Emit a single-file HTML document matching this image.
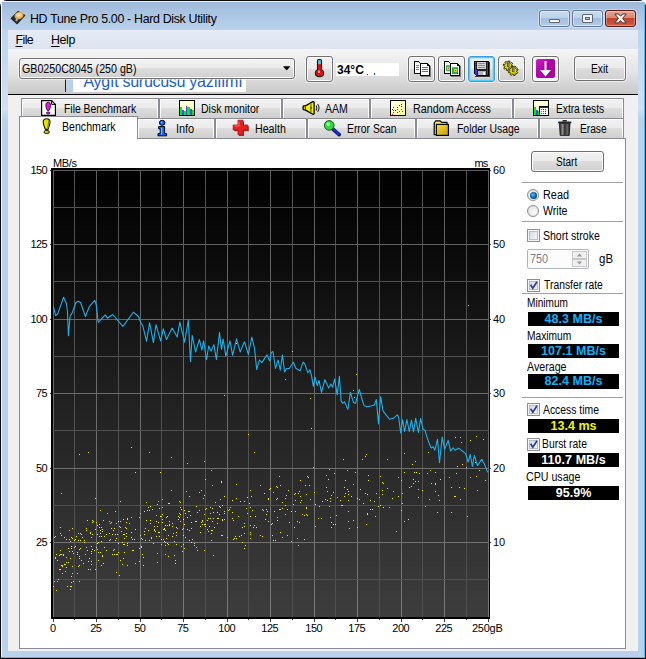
<!DOCTYPE html>
<html lang="en">
<head>
<meta charset="utf-8">
<title>HD Tune Pro 5.00 - Hard Disk Utility</title>
<style>
html,body{margin:0;padding:0;background:#fff;}
body{width:646px;height:659px;position:relative;overflow:hidden;font-family:"Liberation Sans",sans-serif;font-size:11px;color:#000;}
.a{position:absolute;}
.t{position:absolute;white-space:nowrap;line-height:1;}
#win{left:0;top:0;width:646px;height:659px;box-sizing:border-box;border-radius:7px 7px 0 0;background:#b9d1ea;overflow:hidden;}
#tbar{left:0;top:0;width:646px;height:30px;background:linear-gradient(#9cb7d7 0,#a7c1e0 10px,#bad2ec 30px);}
#edgeL{left:0;top:0;width:1px;height:659px;background:#0c0c0c;}
#edgeL2{left:1px;top:1px;width:1px;height:656px;background:#f4f8fc;}
#edgeT{left:0;top:0;width:646px;height:1px;background:#0c0c0c;}
#edgeT2{left:2px;top:1px;width:642px;height:1px;background:#e8f0f8;}
#edgeR{left:645px;top:0;width:1px;height:659px;background:#000;}
#edgeR2{left:644px;top:2px;width:1px;height:656px;background:#3cc6f4;}
#edgeB{left:0;top:658px;width:646px;height:1px;background:#000;}
#edgeB2{left:1px;top:657px;width:644px;height:1px;background:#2ccdf0;}
#menubar{left:8px;top:30px;width:630px;height:19px;background:linear-gradient(#e6ebf5,#dde4ef);}
#client{left:8px;top:49px;width:630px;height:602px;background:#f0f0f0;}
#toolbar{left:8px;top:49px;width:630px;height:45px;background:linear-gradient(#f5f5f5,#e4e4e4 50%,#c8c8c8);}
#tline{left:8px;top:94px;width:630px;height:1px;background:#000;}
.cap{top:10px;height:17px;box-sizing:border-box;border:1px solid #66789a;border-radius:3px;box-shadow:0 0 0 1px rgba(255,255,255,.35),inset 0 0 0 1px rgba(255,255,255,.45);}
.capb{background:linear-gradient(#c9dbef 0,#bdd2ea 45%,#a4bedd 50%,#b4cbe6 100%);}
.capr{background:linear-gradient(#e6a595 0,#dc8572 45%,#c4432c 50%,#cc5c40 100%);border-color:#581818;box-shadow:0 0 0 1px rgba(255,255,255,.35),inset 0 0 0 1px rgba(255,255,255,.3);}
.btn{box-sizing:border-box;border:1px solid #707070;border-radius:3px;background:linear-gradient(#f2f2f2 0,#ebebeb 48%,#dddddd 50%,#cfcfcf 100%);box-shadow:inset 0 0 0 1px #fcfcfc,0 0 0 1px rgba(255,255,255,.55);}
.tab{box-sizing:border-box;border:1px solid #898c95;border-bottom:none;height:20px;background:linear-gradient(#f2f2f2 0,#ebebeb 48%,#dddddd 50%,#cfcfcf 100%);box-shadow:inset 1px 1px 0 #fcfcfc,inset -1px 0 0 #fcfcfc;}
#pane{left:19px;top:138px;width:607px;height:511px;box-sizing:border-box;border:1px solid #898c95;background:#fff;}
#seltab{left:19px;top:116px;width:119px;height:23px;box-sizing:border-box;border:1px solid #898c95;border-bottom:none;background:#fff;}
.sep{left:522px;width:101px;height:1px;background:#a0a0a0;}
.lcd{left:528px;width:91px;height:14px;background:#000;}
.lcdt{position:absolute;left:0;width:91px;text-align:center;top:1px;font-weight:bold;font-size:12.5px;line-height:13px;white-space:nowrap;letter-spacing:0.05px}
.yl{letter-spacing:-0.6px}.xl{letter-spacing:-0.5px;text-indent:-0.5px}
.chk{width:13px;height:13px;box-sizing:border-box;border:1px solid #8e8f8f;background:linear-gradient(135deg,#ccd2dc 0,#e8ebf0 55%,#fafbfc 100%);box-shadow:inset 0 0 0 1px #f4f4f4, inset 0 0 0 2px #b8bec8;}
.rad{width:12px;height:12px;box-sizing:border-box;border:1px solid #8e8f8f;border-radius:50%;background:radial-gradient(circle at 60% 60%,#fdfdfd 0,#e4e6e8 60%,#c8ccd0 100%);}
</style>
</head>
<body>
<div id="win" class="a">
<div id="tbar" class="a"></div>
<div class="a" style="left:2px;top:30px;width:6px;height:90px;background:linear-gradient(#bed5ef 0,#cfe1f4 88%,#b9d1ea 100%)"></div><div class="a" style="left:638px;top:30px;width:6px;height:90px;background:linear-gradient(#bed5ef 0,#cfe1f4 88%,#b9d1ea 100%)"></div>
<div id="edgeL" class="a"></div><div id="edgeL2" class="a"></div>
<div id="edgeT" class="a"></div><div id="edgeT2" class="a"></div>
<div id="edgeR" class="a"></div><div id="edgeR2" class="a"></div>
<div id="edgeB" class="a"></div><div id="edgeB2" class="a"></div>

<!-- title icon -->
<svg class="a" style="left:9px;top:10px" width="18" height="16" viewBox="0 0 18 16">
<path d="M1.5 8.5 L9 1 L16.5 5.5 L8 14.5 Z" fill="#222"/>
<path d="M2 8 L9 1 L16 5 L8 13.5 Z" fill="#2a2a2a"/>
<ellipse cx="10" cy="5.6" rx="4.6" ry="3.6" fill="#e9a94a" transform="rotate(-18 10 5.6)"/>
<ellipse cx="10" cy="5.2" rx="3" ry="2.3" fill="#f6cf84" transform="rotate(-18 10 5.2)"/>
<circle cx="10" cy="5" r="1.1" fill="#e8e8e8"/>
<path d="M8.2 6.5 L6.2 11 L8.2 11.5 L9.4 7 Z" fill="#b8b4b0"/>
</svg>
<span class="t" id="ttl" style="left:30px;top:13px;font-size:12.4px;color:#000;letter-spacing:-0.325px">HD Tune Pro 5.00 - Hard Disk Utility</span>

<!-- caption buttons -->
<div class="a cap capb" style="left:539px;width:31px"></div>
<div class="a" style="left:549px;top:19px;width:11px;height:4px;box-sizing:border-box;border:1px solid #5a6578;background:#f4f6f9;border-radius:1px"></div>
<div class="a cap capb" style="left:572px;width:31px"></div>
<div class="a" style="left:582px;top:14px;width:11px;height:9px;box-sizing:border-box;border:1px solid #5a6578;background:#f4f6f9;border-radius:1px"></div>
<div class="a" style="left:585px;top:17px;width:5px;height:3px;box-sizing:border-box;border:1px solid #5a6578;background:#aec5e0"></div>
<div class="a cap capr" style="left:605px;width:31px"></div>
<svg class="a" style="left:614px;top:13px" width="13" height="11" viewBox="0 0 13 11"><path d="M.8 1 L4.4 1 L6.5 3.2 L8.6 1 L12.2 1 L8.6 5.4 L12.2 9.9 L8.6 9.9 L6.5 7.6 L4.4 9.9 L.8 9.9 L4.4 5.4 Z" fill="#fbf8f6" stroke="#4a3030" stroke-width="1" stroke-linejoin="round"/></svg>

<!-- menu -->
<div id="menubar" class="a"></div>
<span class="t" id="mFile" style="left:15.5px;top:34px;font-size:12.4px;letter-spacing:-0.570px"><u style="text-underline-offset:2px">F</u>ile</span>
<span class="t" id="mHelp" style="left:51px;top:34px;font-size:12.4px;letter-spacing:-0.400px"><u style="text-underline-offset:2px">H</u>elp</span>

<div id="client" class="a"></div>
<div id="toolbar" class="a"></div>
<div id="tline" class="a"></div>

<!-- stray tooltip artifact -->
<div class="a" style="left:65px;top:79px;width:1px;height:13px;background:#1c1c1c"></div>
<div class="a" style="left:67px;top:79px;width:6px;height:13px;background:#b7cff0"></div>
<div class="a" style="left:73px;top:79px;width:173px;height:13px;background:#fff;overflow:hidden"><span class="t" id="tip" style="left:10.5px;top:-5px;font-size:16px;color:#2060c4;letter-spacing:-0.274px">Aygıt sürücüsü yazılımı</span></div>

<!-- combo box -->
<div class="a btn" style="left:19px;top:58px;width:276px;height:21px;border-radius:3px"></div>
<span class="t" id="cmb" style="left:22.27px;top:63.00px;font-size:12.5px;transform:scaleX(0.8538);transform-origin:0 0">GB0250C8045 (250 gB)</span>
<svg class="a" style="left:283px;top:66px" width="8" height="5" viewBox="0 0 8 5"><path d="M0 .2 L7.4 .2 L3.7 4.4 Z" fill="#000"/></svg>

<!-- thermometer button -->
<div class="a btn" style="left:306px;top:56px;width:27px;height:26px"></div>
<svg class="a" style="left:314px;top:59px" width="11" height="19" viewBox="0 0 11 19">
<path d="M3.5 1.5 Q3.5 .5 5.5 .5 Q7.5 .5 7.5 1.5 L7.5 10.4 Q9.6 11.6 9.6 14 Q9.6 17.8 5.5 17.8 Q1.4 17.8 1.4 14 Q1.4 11.6 3.5 10.4 Z" fill="#e01010" stroke="#101010" stroke-width="1.1"/>
<rect x="4.1" y="1.2" width="2.8" height="4" fill="#38d0e8"/>
<rect x="4.2" y="11.5" width="1.6" height="2.4" fill="#ffb0b0"/>
</svg>
<div class="a" style="left:336px;top:63px;width:63px;height:13px;background:#fff"></div>
<span class="t" id="temp" style="left:337px;top:64px;font-size:12px;font-weight:bold">34°C</span>
<div class="a" style="left:367px;top:74px;width:1px;height:1px;background:#2040d0"></div>
<div class="a" style="left:374px;top:73px;width:1px;height:2px;background:#2040d0"></div>

<!-- toolbar buttons -->
<div class="a btn" style="left:408px;top:56px;width:27px;height:26px"></div>
<svg class="a" style="left:413px;top:60px" width="19" height="18" viewBox="0 0 19 18" shape-rendering="crispEdges">
<path d="M1.5 1.5 H5.5 L7.5 3.5 V13.5 H1.5 Z" fill="#fff" stroke="#000"/>
<path d="M3 5.5h3M3 7.5h3M3 9.5h3" stroke="#1e90ff"/>
<path d="M8 16.5h9.5M17.5 6v11" stroke="#808080"/>
<path d="M7.5 3.5 H14.5 L16.5 5.5 V15.5 H7.5 Z" fill="#fff" stroke="#000"/>
<path d="M14.5 3.5V5.5H16.5" fill="none" stroke="#000"/>
<path d="M9 7.5h6M9 9.5h6M9 11.5h6" stroke="#1e78ff"/>
</svg>
<div class="a btn" style="left:438px;top:56px;width:27px;height:26px"></div>
<svg class="a" style="left:443px;top:60px" width="19" height="18" viewBox="0 0 19 18" shape-rendering="crispEdges">
<path d="M1.5 1.5 H5.5 L7.5 3.5 V13.5 H1.5 Z" fill="#fff" stroke="#000"/>
<rect x="3" y="5" width="4" height="6" fill="#20c040"/><rect x="3" y="5" width="4" height="1" fill="#30b8f0"/><rect x="4" y="7" width="3" height="3" fill="#f0d020"/><rect x="5" y="8" width="1" height="1" fill="#e02020"/>
<path d="M8 16.5h9.5M17.5 6v11" stroke="#808080"/>
<path d="M7.5 3.5 H14.5 L16.5 5.5 V15.5 H7.5 Z" fill="#fff" stroke="#000"/>
<path d="M14.5 3.5V5.5H16.5" fill="none" stroke="#000"/>
<rect x="9" y="7" width="6" height="7" fill="#20b040"/><rect x="9" y="7" width="6" height="1" fill="#30b8f0"/><rect x="11" y="9" width="3" height="3" fill="#f0d020"/><rect x="12" y="10" width="1" height="1" fill="#e02020"/><rect x="14" y="13" width="1" height="1" fill="#000"/>
</svg>
<div class="a" style="left:468px;top:56px;width:27px;height:26px;box-sizing:border-box;border:1px solid #3c9bd8;border-radius:3px;background:linear-gradient(#f2f2f2 0,#ebebeb 48%,#dddddd 50%,#cfcfcf 100%);box-shadow:inset 0 0 0 1px #48d4fa,inset 0 0 0 2px rgba(120,220,250,.45),0 0 0 1px rgba(255,255,255,.55)"></div>
<svg class="a" style="left:474px;top:61px" width="16" height="16" viewBox="0 0 16 16" shape-rendering="crispEdges">
<path d="M1 15.5h14.5M15.5 1v15" stroke="#404040"/>
<path d="M.5 .5 H14.5 V14.5 H2.5 L.5 12.5 Z" fill="#3838f0" stroke="#000"/>
<rect x="3" y="1" width="9" height="7" fill="#d4d4d4"/>
<path d="M3 8.5h9M2.5 1v8M12.5 1v8" stroke="#202020" fill="none"/>
<path d="M4 2.5h7M4 4.5h7M4 6.5h7" stroke="#8c8c8c"/>
<rect x="4" y="10" width="8" height="4" fill="#b4b4b4"/>
<path d="M3.5 14V9.5H12.5V14" stroke="#202020" fill="none"/>
<rect x="9" y="11" width="2" height="3" fill="#f0f0f0"/>
</svg>
<div class="a btn" style="left:498px;top:56px;width:27px;height:26px"></div>
<svg class="a" style="left:502px;top:60px" width="18" height="17" viewBox="0 0 18 17">
<path d="M11.1 5.9 L10.8 7.6 L9.3 7.2 L8.7 8.1 L9.6 9.4 L8.2 10.3 L7.4 9.0 L6.3 9.2 L6.1 10.7 L4.4 10.4 L4.8 8.9 L3.9 8.3 L2.6 9.2 L1.7 7.8 L3.0 7.0 L2.8 5.9 L1.3 5.7 L1.6 4.0 L3.1 4.4 L3.7 3.5 L2.8 2.2 L4.2 1.3 L5.0 2.6 L6.1 2.4 L6.3 0.9 L8.0 1.2 L7.6 2.7 L8.5 3.3 L9.8 2.4 L10.7 3.8 L9.4 4.6 L9.6 5.7 Z" fill="#ece400" stroke="#2a2a00" stroke-width=".9" stroke-linejoin="round"/>
<path d="M15.8 12.4 L15.0 13.9 L13.7 13.1 L12.9 13.7 L13.4 15.2 L11.8 15.7 L11.4 14.2 L10.3 14.1 L9.6 15.4 L8.1 14.6 L8.9 13.3 L8.3 12.5 L6.8 13.0 L6.3 11.4 L7.8 11.0 L7.9 9.9 L6.6 9.2 L7.4 7.7 L8.7 8.5 L9.5 7.9 L9.0 6.4 L10.6 5.9 L11.0 7.4 L12.1 7.5 L12.8 6.2 L14.3 7.0 L13.5 8.3 L14.1 9.1 L15.6 8.6 L16.1 10.2 L14.6 10.6 L14.5 11.7 Z" fill="#ece400" stroke="#2a2a00" stroke-width=".9" stroke-linejoin="round"/>
<path d="M5.4 2.6 L6.2 1.2 L7 2.6 V6.8 H5.4 Z M10.4 7.6 L11.2 6.2 L12 7.6 V11.8 H10.4 Z" fill="#b8b8b8" stroke="#303030" stroke-width=".8"/>
</svg>
<div class="a" style="left:532px;top:56px;width:27px;height:26px;box-sizing:border-box;border:1px solid #707070;border-radius:3px;background:#f4f4f4;box-shadow:inset 0 0 0 1px #fcfcfc,0 0 0 1px rgba(255,255,255,.55)"></div>
<div class="a" style="left:536px;top:59px;width:19px;height:19px;border-radius:2px;background:linear-gradient(135deg,#c428bc 0,#b000a8 45%,#a40098 100%)"></div>
<svg class="a" style="left:536px;top:59px" width="19" height="19" viewBox="0 0 19 19"><path d="M8.5 2 L10.5 2 L10.5 11 L15 11 L9.5 17.4 L4 11 L8.5 11 Z" fill="#fff"/></svg>
<div class="a btn" style="left:574px;top:56px;width:52px;height:25px"></div>
<span class="t" id="exit" style="left:590.72px;top:63.00px;font-size:12.5px;transform:scaleX(0.8227);transform-origin:0 0">Exit</span>

<!-- tabs row 1 -->
<div class="a tab" style="left:21px;top:98px;width:138px"></div>
<div class="a tab" style="left:159px;top:98px;width:123px"></div>
<div class="a tab" style="left:282px;top:98px;width:88px"></div>
<div class="a tab" style="left:370px;top:98px;width:143px"></div>
<div class="a tab" style="left:513px;top:98px;width:111px"></div>
<!-- tabs row 2 -->
<div class="a tab" style="left:21px;top:118px;width:118px"></div>
<div class="a tab" style="left:137px;top:118px;width:78px"></div>
<div class="a tab" style="left:215px;top:118px;width:92px"></div>
<div class="a tab" style="left:307px;top:118px;width:109px"></div>
<div class="a tab" style="left:416px;top:118px;width:123px"></div>
<div class="a tab" style="left:539px;top:118px;width:85px"></div>
<div id="pane" class="a"></div>
<div id="seltab" class="a"></div>

<!-- tab icons row 1 -->
<svg class="a" style="left:41px;top:100px" width="15" height="16" viewBox="0 0 15 16">
<path d="M.6 .6 L10.6 .6 L14.4 4.4 L14.4 15.4 L.6 15.4 Z" fill="#fff" stroke="#000" stroke-width="1.2"/>
<path d="M10.6 .6 L10.6 4.4 L14.4 4.4" fill="none" stroke="#000" stroke-width="1"/>
<path d="M7.2 2.2 Q9.6 2.2 9.6 5.2 Q9.6 7.8 8 10.6 L6.4 10.6 Q4.8 7.8 4.8 5.2 Q4.8 2.2 7.2 2.2 Z" fill="#e814e0" stroke="#300030" stroke-width=".8"/>
<ellipse cx="7.2" cy="13" rx="1.7" ry="1.1" fill="#e814e0" stroke="#300030" stroke-width=".8"/>
</svg>
<svg class="a" style="left:178px;top:99px" width="19" height="19" viewBox="0 0 19 19" shape-rendering="crispEdges">
<defs><linearGradient id="dm" x1="0" y1="0" x2="1" y2="1"><stop offset="0" stop-color="#fffff0"/><stop offset="1" stop-color="#ffff90"/></linearGradient></defs>
<rect x="1" y="1" width="16" height="16" fill="#000"/>
<rect x="2" y="2" width="14" height="14" fill="url(#dm)"/>
<rect x="2" y="8" width="2" height="8" fill="#00f000"/>
<rect x="4" y="11" width="2" height="5" fill="#4848ff"/>
<rect x="6" y="12" width="2" height="4" fill="#00f000"/>
<rect x="8" y="7" width="1" height="9" fill="#4848ff"/>
<rect x="9" y="8" width="3" height="8" fill="#00f000"/>
<rect x="12" y="10" width="2" height="6" fill="#4848ff"/>
<rect x="14" y="11" width="2" height="5" fill="#00f000"/>
</svg>
<svg class="a" style="left:301px;top:99px" width="20" height="18" viewBox="0 0 20 18"><g transform="translate(1.2 1.6) scale(.93 .86)">
<path d="M3.2 6.2 L11.4 1.2 Q12.8 .8 12.8 2.2 L12.8 14.8 Q12.8 16.4 11.4 15.8 L3.2 10.8 L2 10.8 Q1 10.8 1 9.8 L1 7.2 Q1 6.2 2 6.2 Z" fill="#f4f000" stroke="#000" stroke-width="1.4" stroke-linejoin="round"/>
<path d="M9.4 3.4V13.8" stroke="#707000" stroke-width="1.3"/>
<path d="M3.4 7v3" stroke="#000" stroke-width="1"/>
<rect x="8.8" y="7.6" width="1.3" height="1.8" fill="#101010"/>
<path d="M14.8 5.6 Q16.6 8.5 14.8 11.4 M16.6 4 Q19.6 8.5 16.6 13" fill="none" stroke="#202020" stroke-width="1.1"/>
</g></svg>
<svg class="a" style="left:390px;top:100px" width="17" height="17" viewBox="0 0 17 17" shape-rendering="crispEdges">
<defs><linearGradient id="ra" x1="0" y1="0" x2="1" y2="1"><stop offset="0" stop-color="#fffff0"/><stop offset="1" stop-color="#ffff90"/></linearGradient></defs>
<rect x="0" y="0" width="16" height="16" fill="#000"/>
<rect x="1" y="1" width="14" height="14" fill="url(#ra)"/>
<rect x="3" y="7" width="1" height="1" fill="#1010ff"/><rect x="2" y="9" width="1" height="1" fill="#1010ff"/><rect x="5" y="10" width="1" height="1" fill="#1010ff"/><rect x="7" y="7" width="1" height="1" fill="#1010ff"/><rect x="9" y="5" width="1" height="1" fill="#1010ff"/><rect x="11" y="4" width="1" height="1" fill="#1010ff"/><rect x="11" y="6" width="1" height="1" fill="#1010ff"/><rect x="3" y="10" width="1" height="1" fill="#ff1010"/><rect x="3" y="12" width="1" height="1" fill="#ff1010"/><rect x="2" y="14" width="1" height="1" fill="#ff1010"/><rect x="7" y="9" width="1" height="1" fill="#ff1010"/><rect x="7" y="12" width="1" height="1" fill="#ff1010"/><rect x="9" y="11" width="1" height="1" fill="#ff1010"/><rect x="11" y="9" width="1" height="1" fill="#ff1010"/><rect x="12" y="11" width="1" height="1" fill="#ff1010"/>
</svg>
<svg class="a" style="left:533px;top:100px" width="17" height="17" viewBox="0 0 17 17" shape-rendering="crispEdges">
<defs><linearGradient id="et" x1="0" y1="0" x2="1" y2="1"><stop offset="0" stop-color="#fffff0"/><stop offset="1" stop-color="#ffffa0"/></linearGradient></defs>
<rect x="0" y="0" width="16" height="16" fill="#000"/>
<rect x="1" y="1" width="14" height="14" fill="url(#et)"/>
<rect x="1" y="7" width="2" height="8" fill="#00f000"/>
<rect x="3" y="10" width="2" height="5" fill="#4848ff"/>
<rect x="5" y="11" width="1" height="4" fill="#00f000"/>
<rect x="6" y="6" width="9" height="9" fill="#000"/>
<rect x="7" y="7" width="8" height="1" fill="#2020e0"/>
<rect x="7" y="8" width="8" height="7" fill="#fff"/>
<rect x="8" y="9" width="1" height="1" fill="#ff1010"/><rect x="10" y="9" width="1" height="1" fill="#1010ff"/><rect x="12" y="9" width="1" height="1" fill="#ff1010"/><rect x="8" y="11" width="1" height="1" fill="#10c010"/><rect x="10" y="11" width="1" height="1" fill="#ff1010"/><rect x="12" y="11" width="1" height="1" fill="#ff1010"/><rect x="8" y="13" width="1" height="1" fill="#ff1010"/><rect x="10" y="13" width="1" height="1" fill="#ff1010"/><rect x="12" y="13" width="1" height="1" fill="#1010ff"/>
</svg>
<!-- tab icons row 2 -->
<svg class="a" style="left:42px;top:118px" width="10" height="17" viewBox="0 0 10 17">
<path d="M4.6 .8 Q8 .8 8 4 Q8 7 6 11.4 L3.4 11.4 Q1.2 7 1.2 4 Q1.2 .8 4.6 .8 Z" fill="#e6e600" stroke="#181800" stroke-width="1.1"/>
<path d="M6.4 2.4 Q7.2 4.4 5.4 10.6" fill="none" stroke="#909000" stroke-width="1.2"/>
<rect x="2.2" y="12.6" width="5" height="2.8" rx="1.2" fill="#d8d800" stroke="#181800" stroke-width="1"/>
</svg>
<svg class="a" style="left:157px;top:119px" width="11" height="18" viewBox="0 0 11 18">
<ellipse cx="5.2" cy="3.8" rx="2.8" ry="2.5" fill="#1060ff" stroke="#000" stroke-width="1"/>
<path d="M1.6 7.6 L7.6 7.6 L7.6 14.6 L9.6 14.6 L9.6 16.8 L1 16.8 L1 14.6 L3.2 14.6 L3.2 9.8 L1.6 9.8 Z" fill="#1060ff" stroke="#000" stroke-width="1"/>
<path d="M4.6 8.6V15.6M4.6 2.6v2" stroke="#40d0ff" stroke-width="1.4"/>
</svg>
<svg class="a" style="left:232px;top:119px" width="18" height="18" viewBox="0 0 18 18">
<path d="M7 2.4 L12 2.4 L12 7.2 L16.8 7.2 L16.8 12.2 L12 12.2 L12 17 L7 17 L7 12.2 L2.2 12.2 L2.2 7.2 L7 7.2 Z" fill="#701010" opacity=".8"/>
<path d="M6 1.2 L11 1.2 L11 6 L15.8 6 L15.8 11 L11 11 L11 15.8 L6 15.8 L6 11 L1.2 11 L1.2 6 L6 6 Z" fill="#e82020" stroke="#b01010" stroke-width=".8"/>
<path d="M7 2.4v4.6H2.4" fill="none" stroke="#ff7070" stroke-width="1"/>
</svg>
<svg class="a" style="left:323px;top:119px" width="19" height="18" viewBox="0 0 19 18">
<path d="M9.6 9.8 L16.2 15.6" stroke="#101060" stroke-width="3.6" stroke-linecap="round"/>
<path d="M9.6 9.6 L15.8 15" stroke="#2030e0" stroke-width="2" stroke-linecap="round"/>
<circle cx="6.2" cy="6.4" r="4.8" fill="#30d840" stroke="#106010" stroke-width="1"/>
<circle cx="5.2" cy="5.2" r="2" fill="#90f898"/>
</svg>
<svg class="a" style="left:433px;top:119px" width="18" height="18" viewBox="0 0 18 18">
<path d="M1.2 4 L2.8 1.8 L7.2 1.8 L8.6 3.4 L14 3.4 L14 15.6 L1.2 15.6 Z" fill="#f8e860" stroke="#000" stroke-width="1.2" stroke-linejoin="round"/>
<defs><linearGradient id="fg" x1="0" y1="0" x2="1" y2="1"><stop offset="0" stop-color="#f8e040"/><stop offset="1" stop-color="#c89808"/></linearGradient></defs>
<rect x="3.4" y="5.4" width="12" height="11" fill="url(#fg)" stroke="#000" stroke-width="1.2"/>
</svg>
<svg class="a" style="left:557px;top:119px" width="16" height="18" viewBox="0 0 16 18">
<defs><linearGradient id="tg" x1="0" y1="0" x2="1" y2="0"><stop offset="0" stop-color="#181818"/><stop offset=".3" stop-color="#909090"/><stop offset=".5" stop-color="#303030"/><stop offset=".75" stop-color="#686868"/><stop offset="1" stop-color="#101010"/></linearGradient></defs>
<path d="M2.4 4.4 L13 4.4 L12.2 16.4 L3.2 16.4 Z" fill="url(#tg)" stroke="#101010" stroke-width=".8"/>
<rect x="1" y="2.4" width="13.4" height="2.2" rx=".8" fill="#282828"/>
<rect x="5.6" y="1" width="4.2" height="1.6" fill="#282828"/>
</svg>

<!-- tab labels -->
<span class="t" id="tb1" style="left:64.10px;top:103.00px;font-size:12.5px;transform:scaleX(0.8299);transform-origin:0 0">File Benchmark</span>
<span class="t" id="tb2" style="left:201.04px;top:103.00px;font-size:12.5px;transform:scaleX(0.8400);transform-origin:0 0">Disk monitor</span>
<span class="t" id="tb3" style="left:324.74px;top:103.00px;font-size:12.5px;transform:scaleX(0.8447);transform-origin:0 0">AAM</span>
<span class="t" id="tb4" style="left:412.91px;top:103.00px;font-size:12.5px;transform:scaleX(0.8612);transform-origin:0 0">Random Access</span>
<span class="t" id="tb5" style="left:556.11px;top:103.00px;font-size:12.5px;transform:scaleX(0.8154);transform-origin:0 0">Extra tests</span>
<span class="t" id="tb6" style="left:61.78px;top:121.00px;font-size:12.5px;transform:scaleX(0.8478);transform-origin:0 0">Benchmark</span>
<span class="t" id="tb7" style="left:176.17px;top:123.00px;font-size:12.5px;transform:scaleX(0.8721);transform-origin:0 0">Info</span>
<span class="t" id="tb8" style="left:255.15px;top:123.00px;font-size:12.5px;transform:scaleX(0.8526);transform-origin:0 0">Health</span>
<span class="t" id="tb9" style="left:347.09px;top:123.00px;font-size:12.5px;transform:scaleX(0.8295);transform-origin:0 0">Error Scan</span>
<span class="t" id="tb10" style="left:457.13px;top:123.00px;font-size:12.5px;transform:scaleX(0.8342);transform-origin:0 0">Folder Usage</span>
<span class="t" id="tb11" style="left:579.52px;top:123.00px;font-size:12.5px;transform:scaleX(0.8156);transform-origin:0 0">Erase</span>

<!-- chart -->
<svg class="a" style="left:0;top:0" width="646" height="659" viewBox="0 0 646 659" shape-rendering="crispEdges">
<defs>
<linearGradient id="bg" x1="0" y1="0" x2="0" y2="1"><stop offset="0" stop-color="#000"/><stop offset=".2" stop-color="#0b0b0b"/><stop offset=".5" stop-color="#202020"/><stop offset="1" stop-color="#3d3d3d"/></linearGradient>
<linearGradient id="gMv" x1="0" y1="0" x2="0" y2="1"><stop offset="0" stop-color="#5e5e5e"/><stop offset="1" stop-color="#787878"/></linearGradient>
<linearGradient id="gmv" x1="0" y1="0" x2="0" y2="1"><stop offset="0" stop-color="#525252"/><stop offset="1" stop-color="#505050"/></linearGradient>
</defs>
<style>.gMv{fill:url(#gMv)}.gmv{fill:url(#gmv)}</style>
<rect x="51" y="168" width="439" height="451" fill="#000"/>
<rect x="53" y="170" width="436" height="447" fill="url(#bg)"/>
<rect class="gMv" x="53" y="170" width="1" height="447"/><rect class="gmv" x="74" y="170" width="1" height="447"/><rect class="gMv" x="96" y="170" width="1" height="447"/><rect class="gmv" x="118" y="170" width="1" height="447"/><rect class="gMv" x="140" y="170" width="1" height="447"/><rect class="gmv" x="161" y="170" width="1" height="447"/><rect class="gMv" x="183" y="170" width="1" height="447"/><rect class="gmv" x="205" y="170" width="1" height="447"/><rect class="gMv" x="227" y="170" width="1" height="447"/><rect class="gmv" x="248" y="170" width="1" height="447"/><rect class="gMv" x="270" y="170" width="1" height="447"/><rect class="gmv" x="292" y="170" width="1" height="447"/><rect class="gMv" x="314" y="170" width="1" height="447"/><rect class="gmv" x="335" y="170" width="1" height="447"/><rect class="gMv" x="357" y="170" width="1" height="447"/><rect class="gmv" x="379" y="170" width="1" height="447"/><rect class="gMv" x="401" y="170" width="1" height="447"/><rect class="gmv" x="422" y="170" width="1" height="447"/><rect class="gMv" x="444" y="170" width="1" height="447"/><rect class="gmv" x="466" y="170" width="1" height="447"/><rect class="gMv" x="488" y="170" width="1" height="447"/><rect x="53" y="170" width="436" height="1" fill="#5e5e5e"/><rect x="53" y="207" width="436" height="1" fill="#505050"/><rect x="53" y="244" width="436" height="1" fill="#626262"/><rect x="53" y="281" width="436" height="1" fill="#505050"/><rect x="53" y="319" width="436" height="1" fill="#666666"/><rect x="53" y="356" width="436" height="1" fill="#505050"/><rect x="53" y="393" width="436" height="1" fill="#6a6a6a"/><rect x="53" y="430" width="436" height="1" fill="#505050"/><rect x="53" y="468" width="436" height="1" fill="#6f6f6f"/><rect x="53" y="505" width="436" height="1" fill="#505050"/><rect x="53" y="542" width="436" height="1" fill="#737373"/><rect x="53" y="579" width="436" height="1" fill="#505050"/>
<rect x="53" y="619" width="1" height="3" fill="#404040"/><rect x="74" y="619" width="1" height="1" fill="#404040"/><rect x="96" y="619" width="1" height="3" fill="#404040"/><rect x="118" y="619" width="1" height="1" fill="#404040"/><rect x="140" y="619" width="1" height="3" fill="#404040"/><rect x="161" y="619" width="1" height="1" fill="#404040"/><rect x="183" y="619" width="1" height="3" fill="#404040"/><rect x="205" y="619" width="1" height="1" fill="#404040"/><rect x="227" y="619" width="1" height="3" fill="#404040"/><rect x="248" y="619" width="1" height="1" fill="#404040"/><rect x="270" y="619" width="1" height="3" fill="#404040"/><rect x="292" y="619" width="1" height="1" fill="#404040"/><rect x="314" y="619" width="1" height="3" fill="#404040"/><rect x="335" y="619" width="1" height="1" fill="#404040"/><rect x="357" y="619" width="1" height="3" fill="#404040"/><rect x="379" y="619" width="1" height="1" fill="#404040"/><rect x="401" y="619" width="1" height="3" fill="#404040"/><rect x="422" y="619" width="1" height="1" fill="#404040"/><rect x="444" y="619" width="1" height="3" fill="#404040"/><rect x="466" y="619" width="1" height="1" fill="#404040"/><rect x="488" y="619" width="1" height="3" fill="#404040"/><rect x="50" y="170" width="1" height="1" fill="#404040"/><rect x="490" y="170" width="1" height="1" fill="#404040"/><rect x="50" y="244" width="1" height="1" fill="#404040"/><rect x="490" y="244" width="1" height="1" fill="#404040"/><rect x="50" y="319" width="1" height="1" fill="#404040"/><rect x="490" y="319" width="1" height="1" fill="#404040"/><rect x="50" y="393" width="1" height="1" fill="#404040"/><rect x="490" y="393" width="1" height="1" fill="#404040"/><rect x="50" y="468" width="1" height="1" fill="#404040"/><rect x="490" y="468" width="1" height="1" fill="#404040"/><rect x="50" y="542" width="1" height="1" fill="#404040"/><rect x="490" y="542" width="1" height="1" fill="#404040"/>
<path d="M194 543h1M212 530h1M69 539h1M413 479h1M304 539h1M179 517h1M132 550h1M80 533h1M190 515h1M357 527h1M370 509h1M382 482h1M70 586h1M189 540h1M79 581h1M177 528h1M63 554h1M387 488h1M88 569h1M234 538h1M470 477h1M167 516h1M214 527h1M227 537h1M80 540h1M76 536h1M97 525h1M118 521h1M211 540h1M263 510h1M202 524h1M117 534h1M167 525h1M375 516h1M208 518h1M212 508h1M139 561h1M401 510h1M368 475h1M404 521h1M205 479h1M145 528h1M158 522h1M61 554h1M55 536h1M295 511h1M99 536h1M273 540h1M250 490h1M166 538h1M418 481h1M158 532h1M120 560h1M415 461h1M277 498h1M61 535h1M61 565h1M476 476h1M70 541h1M165 542h1M92 549h1M402 493h1M250 525h1M109 533h1M101 536h1M179 513h1M204 495h1M293 504h1M460 499h1M204 514h1M84 542h1M345 493h1M180 514h1M291 511h1M188 511h1M272 523h1M55 557h1M63 555h1M222 535h1M333 524h1M114 554h1M355 472h1M111 528h1M54 581h1M340 500h1M169 521h1M268 499h1M87 520h1M300 502h1M180 502h1M256 527h1M460 437h1M249 503h1M306 508h1M467 516h1M359 499h1M264 493h1M184 524h1M179 501h1M210 513h1M169 525h1M366 524h1M333 492h1M456 473h1M166 517h1M295 500h1M114 528h1M202 521h1M233 539h1M217 512h1M171 490h1M62 573h1M308 477h1M161 516h1M252 510h1M185 513h1M102 555h1M150 523h1M184 548h1M260 485h1M187 517h1M165 545h1M152 509h1M153 543h1M269 489h1M466 467h1M115 511h1M196 547h1M378 506h1M197 512h1M175 560h1M143 565h1M74 540h1M66 562h1M387 459h1M321 518h1M191 522h1M221 481h1M196 521h1M393 491h1M81 560h1M168 503h1M247 513h1M342 505h1M140 513h1M305 485h1M98 542h1M71 537h1M464 488h1M213 512h1M164 529h1M195 521h1M189 530h1M97 543h1M331 495h1M176 544h1M189 496h1M139 517h1M56 554h1M124 552h1M92 534h1M176 527h1M100 552h1M123 534h1M414 472h1M220 507h1M71 586h1M104 547h1M326 487h1M244 523h1M266 514h1M131 517h1M109 521h1M71 546h1M275 540h1M408 519h1M451 487h1M115 540h1M144 534h1M132 539h1M103 563h1M437 512h1M245 545h1M163 539h1M189 511h1M241 535h1M110 539h1M207 520h1M151 538h1M260 535h1M159 508h1M168 556h1M298 545h1M372 509h1M72 551h1M392 498h1M462 464h1M129 523h1M56 590h1M250 507h1M154 530h1M169 503h1M168 535h1M60 527h1M301 500h1M449 477h1M203 498h1M374 501h1M100 510h1M178 519h1M382 490h1M165 530h1M213 555h1M322 501h1M287 535h1M127 519h1M55 558h1M268 521h1M176 535h1M330 501h1M326 475h1M64 537h1M155 531h1M334 473h1M127 543h1M157 526h1M120 527h1M123 519h1M97 549h1M242 542h1M99 524h1M255 516h1M236 538h1M250 534h1M96 547h1M162 507h1M133 550h1M477 490h1M123 544h1M280 509h1M144 531h1M78 540h1M59 555h1M168 544h1M224 513h1M297 538h1M207 529h1M181 509h1M217 518h1M367 494h1M184 510h1M425 506h1M328 479h1M162 522h1M204 524h1M418 497h1M294 494h1M78 533h1M267 511h1M86 547h1M65 571h1M68 562h1M212 521h1M242 527h1M272 535h1M191 528h1M70 558h1M184 524h1M349 528h1M97 534h1M298 493h1M459 487h1M70 589h1M247 497h1M232 518h1M60 569h1M109 540h1M135 563h1M370 500h1M58 579h1M409 487h1M79 558h1M116 523h1M235 536h1M300 480h1M187 529h1M54 537h1M439 500h1M302 514h1M90 569h1M140 535h1M143 557h1M91 546h1M280 532h1M135 529h1M299 522h1M118 543h1M121 531h1M279 476h1M69 551h1M89 558h1M81 534h1M165 554h1M224 511h1M149 510h1M73 581h1M77 573h1M183 535h1M99 527h1M126 522h1M348 500h1M440 479h1M250 538h1M115 534h1M169 524h1M199 492h1M344 496h1M141 546h1M95 569h1M60 550h1M114 549h1M148 530h1M131 537h1M91 537h1M172 536h1M307 476h1M367 513h1M60 533h1M213 518h1M279 509h1M106 550h1M380 505h1M287 509h1M98 552h1M66 557h1M365 493h1M268 498h1M113 550h1M117 554h1M282 537h1M158 501h1M422 490h1M161 544h1M83 563h1M62 565h1M348 521h1M162 519h1M186 491h1M276 486h1M285 498h1M230 507h1M91 561h1M336 515h1M253 527h1M158 532h1M220 499h1M157 504h1M122 542h1M222 520h1M101 541h1M200 532h1M451 512h1M218 518h1M368 480h1M246 508h1M116 572h1M142 554h1M222 519h1M96 522h1M265 519h1M127 545h1M236 498h1M276 499h1M315 526h1M330 498h1M353 484h1M344 487h1M232 512h1M383 483h1M404 472h1M127 518h1M205 509h1M161 539h1M185 537h1M159 532h1M398 477h1M209 526h1M103 520h1M228 510h1M160 516h1M156 536h1M360 489h1M416 472h1M122 564h1M273 492h1M309 485h1M318 518h1M289 522h1M300 496h1M341 505h1M210 507h1M151 537h1M176 532h1M428 452h1M66 567h1M206 508h1M71 548h1M219 506h1M331 527h1M164 541h1M205 524h1M72 566h1M74 547h1M90 533h1M175 563h1M250 532h1M239 536h1M72 573h1M167 543h1M162 514h1M232 500h1M345 480h1M277 517h1M438 495h1M127 565h1M415 481h1M210 518h1M102 529h1M211 470h1M379 497h1M100 533h1M57 581h1M337 497h1M182 529h1M126 536h1M192 539h1M157 553h1M270 488h1M306 514h1M475 462h1M244 548h1M238 516h1M277 487h1M125 527h1M298 493h1M79 556h1M182 551h1M183 528h1M65 564h1M306 507h1M299 491h1M291 541h1M163 529h1M294 527h1M102 556h1M85 554h1M382 494h1M113 530h1M156 521h1M183 519h1M126 533h1M412 464h1M367 514h1M402 503h1M347 470h1M306 494h1M101 527h1M59 555h1M401 480h1M224 496h1M86 528h1M72 538h1M222 505h1M62 566h1M73 553h1M271 524h1M485 480h1M329 469h1M329 506h1M200 526h1M262 509h1M112 554h1M250 516h1M82 537h1M88 561h1M431 483h1M165 525h1M148 507h1M335 524h1M87 550h1M201 490h1M145 540h1M348 494h1M325 499h1M313 467h1M77 552h1M196 506h1M92 522h1M315 504h1M174 555h1M110 523h1M92 520h1M79 565h1M212 485h1M124 538h1M100 530h1M429 499h1M150 520h1M141 538h1M147 510h1M197 550h1M123 558h1M64 564h1M57 560h1M126 528h1M479 470h1M69 530h1M240 501h1M435 483h1M112 534h1M102 531h1M172 523h1M274 511h1M211 533h1M191 542h1M221 482h1M164 528h1M75 539h1M53 586h1M224 519h1M348 511h1M319 506h1M280 485h1M157 562h1M430 470h1M107 513h1M98 560h1M91 546h1M383 507h1M156 515h1M219 514h1M131 532h1M194 545h1M427 473h1M215 502h1M181 546h1M221 535h1M343 459h1M282 508h1M233 520h1M244 526h1M71 576h1M104 536h1M91 551h1M77 554h1M116 538h1M172 526h1M236 484h1M141 547h1M295 493h1M285 514h1M435 472h1M331 522h1M347 489h1M418 489h1M94 550h1M351 496h1M154 526h1M297 521h1M67 586h1M150 506h1M282 502h1M457 466h1M288 490h1M455 496h1M75 546h1M183 544h1M254 525h1M95 529h1M124 544h1M118 552h1M286 495h1M124 544h1M229 509h1M60 554h1M353 520h1M120 521h1M90 532h1M362 459h1M71 582h1M454 496h1M91 553h1M348 491h1M149 540h1M262 536h1M330 517h1M93 521h1M396 531h1M154 529h1M91 564h1M201 522h1M266 509h1M199 510h1M180 507h1M106 534h1M211 530h1M124 534h1M162 499h1M277 520h1M86 530h1M217 523h1M78 566h1M68 548h1M116 554h1M180 521h1M174 541h1M204 550h1M435 491h1M76 536h1M134 539h1M244 501h1M224 519h1M119 526h1M380 476h1M178 516h1M389 507h1M159 536h1M101 565h1M205 526h1M111 522h1M304 515h1M119 575h1M435 484h1M173 533h1M146 520h1M357 498h1M327 500h1M79 549h1M413 483h1M327 491h1M398 496h1M66 539h1M80 548h1M307 515h1M84 540h1M202 520h1M244 526h1M139 548h1M366 454h1M59 569h1M208 531h1M72 528h1M251 496h1M120 501h1M411 486h1M144 511h1M419 473h1M146 502h1M285 505h1M142 539h1M310 499h1M244 533h1M363 503h1M314 492h1M376 493h1M79 454h1M88 452h1M131 447h1M149 452h1M171 457h1M187 463h1M204 461h1M248 434h1M254 452h1M61 493h1M95 498h1M135 472h1M160 472h1M224 395h1M285 379h1M356 374h1M354 397h1M292 351h1M236 343h1M353 390h1M468 305h1M310 398h1M311 428h1M470 440h1M455 437h1M461 442h1M476 436h1M483 439h1M404 453h1M365 456h1" stroke="#f0f000" stroke-width="1" fill="none" transform="translate(0 .5)"/>
<polyline points="53.4,306.3 55.6,315.6 57.7,313.9 63.6,297.3 66.5,303.7 67.5,312.2 68.4,335.7 70.1,316 72.1,313.1 75.9,302.5 78.1,301.2 80.6,302.5 85.4,316.5 89.5,306.3 94.8,300.3 96.3,305.1 98.2,322.5 105.3,314.8 107.4,318.2 112.7,314.5 122.9,326.4 133.4,312.2 138.5,316.5 140.2,321.6 142.8,325.9 146.5,341.2 149.6,322.8 153.4,342.6 156,324.7 160.6,340.9 163.3,328.9 166.5,339.5 172.1,328.1 177.2,337.1 179.8,322.1 184.6,342.2 188.3,320.1 190.5,361.6 192.2,335.4 195.6,351.9 199.4,339.5 201.9,350.2 203.6,340.9 206.5,359.6 208.7,346 211,351.1 213.9,344.6 216.4,359.6 219.5,332.4 221.5,349.4 223.2,339.2 225.8,356.2 230,340.9 232.6,355.3 236.5,338.8 240.2,351.9 244.5,341.7 248.4,354.5 251.8,337.1 254.5,348.1 256.7,369.6 259.4,360 261.9,362.6 267,354.9 269.6,360.9 271.3,352.4 273,351.5 275.5,368.5 278.1,360 280.3,370.2 282.4,354.9 284.6,371.9 286.6,368.5 289.2,368.5 293.4,362.2 296,368.5 300.2,370.7 303.1,362.2 304.8,363.9 307.9,372.8 309.9,369.7 311.6,376.2 313.3,386.4 315,377 317.3,385.6 319,380.4 321.5,392.4 324.9,379.6 328.7,388.1 330.9,383.9 332.6,387.3 334.6,379 337.2,394.9 339.4,376.2 341.1,400.9 342.8,403.4 344.5,401.7 347.9,409.4 350.4,392.4 353.5,402.6 355.5,403.4 359.3,389.3 361.5,397.5 364.1,405.6 366.6,406.8 370.9,406 374.3,405.1 376.3,399.5 378.5,423.9 380.6,396.6 383.1,411.1 389.6,419.3 393.9,417.9 397.3,414.8 398.6,417 400.7,432.9 402.5,419.7 404.6,431.5 406.9,419.5 409.3,431.5 411.4,420.2 413.5,431.8 415.7,418.3 418.4,432.4 420.6,418.3 423,428.9 425,430.4 428.1,440.6 431.2,448 433.2,446.8 434.9,450.2 437.5,439.2 439.5,462.7 442.2,437.1 444.6,449.4 448.2,440.4 450.6,451.1 453.1,447.7 454.8,450.2 458.7,448.2 465.6,453.6 468.1,462.1 470.2,454.5 472.4,466.4 474.4,455.3 477.5,465.6 481.7,459.3 484.3,463.9 487.7,472.4" fill="none" stroke="#1ab6f2" stroke-width="1.05" shape-rendering="geometricPrecision" stroke-linejoin="round"/>
</svg>

<!-- axis labels -->
<span class="t" id="yu" style="left:53px;top:158px;letter-spacing:-0.360px">MB/s</span>
<span class="t" id="yu2" style="left:474.5px;top:158px;letter-spacing:-0.830px">ms</span>
<span class="t yl" style="right:599px;top:165px">150</span>
<span class="t yl" style="right:599px;top:239px">125</span>
<span class="t yl" style="right:599px;top:314px">100</span>
<span class="t yl" style="right:599px;top:388px">75</span>
<span class="t yl" style="right:599px;top:463px">50</span>
<span class="t yl" style="right:599px;top:537px">25</span>
<span class="t" style="left:493px;top:165px">60</span>
<span class="t" style="left:493px;top:239px">50</span>
<span class="t" style="left:493px;top:314px">40</span>
<span class="t" style="left:493px;top:388px">30</span>
<span class="t" style="left:493px;top:463px">20</span>
<span class="t" style="left:493px;top:537px">10</span>
<span class="t xl" style="left:43px;width:20px;text-align:center;top:623px">0</span>
<span class="t xl" style="left:86px;width:20px;text-align:center;top:623px">25</span>
<span class="t xl" style="left:130px;width:20px;text-align:center;top:623px">50</span>
<span class="t xl" style="left:173px;width:20px;text-align:center;top:623px">75</span>
<span class="t xl" style="left:212px;width:30px;text-align:center;top:623px">100</span>
<span class="t xl" style="left:255px;width:30px;text-align:center;top:623px">125</span>
<span class="t xl" style="left:299px;width:30px;text-align:center;top:623px">150</span>
<span class="t xl" style="left:342px;width:30px;text-align:center;top:623px">175</span>
<span class="t xl" style="left:386px;width:30px;text-align:center;top:623px">200</span>
<span class="t xl" style="left:429px;width:30px;text-align:center;top:623px">225</span>
<span class="t" id="xlast" style="left:472px;top:623px;letter-spacing:-0.260px">250gB</span>

<!-- right panel -->
<div class="a btn" style="left:531px;top:151px;width:73px;height:21px"></div>
<span class="t" id="start" style="left:555.76px;top:156.00px;font-size:12.5px;transform:scaleX(0.8019);transform-origin:0 0">Start</span>
<div class="a sep" style="top:182px"></div>
<div class="a rad" style="left:527px;top:189px"></div>
<div class="a" style="left:529.5px;top:191.5px;width:7px;height:7px;border-radius:50%;background:radial-gradient(circle at 42% 42%,#54c8fc 0,#1f8fd8 28%,#135a94 55%,#0c2c4c 85%,#283848 100%)"></div>
<span class="t" id="rd" style="left:542.77px;top:189.00px;font-size:12.5px;transform:scaleX(0.8699);transform-origin:0 0">Read</span>
<div class="a rad" style="left:527px;top:205px"></div>
<span class="t" id="wr" style="left:542.75px;top:205.00px;font-size:12.5px;transform:scaleX(0.8443);transform-origin:0 0">Write</span>
<div class="a sep" style="top:221px"></div>
<div class="a chk" style="left:527px;top:229px"></div>
<span class="t" id="ss" style="left:542.53px;top:230.00px;font-size:12.5px;transform:scaleX(0.8420);transform-origin:0 0">Short stroke</span>
<div class="a" style="left:527px;top:249px;width:62px;height:20px;box-sizing:border-box;border:1px solid #b0b4bc;border-radius:2px;background:#fcfcfc"></div>
<span class="t" id="sp" style="left:530.43px;top:253.00px;font-size:12.5px;transform:scaleX(0.8630);transform-origin:0 0;color:#7c8090">750</span>
<div class="a" style="left:572px;top:251px;width:15px;height:8px;box-sizing:border-box;border:1px solid #c8c8c8;background:#f0f0f0"></div>
<div class="a" style="left:572px;top:259px;width:15px;height:8px;box-sizing:border-box;border:1px solid #c8c8c8;background:#f0f0f0"></div>
<svg class="a" style="left:576px;top:253px" width="7" height="12" viewBox="0 0 7 12"><path d="M3.5 .5 L6.2 3.5 L.8 3.5 Z M.8 8.5 L6.2 8.5 L3.5 11.5 Z" fill="#9a9a9a"/></svg>
<span class="t" id="gb" style="left:599.27px;top:253.00px;font-size:12.5px;transform:scaleX(0.9178);transform-origin:0 0">gB</span>
<div class="a chk" style="left:527px;top:279px"></div>
<svg class="a ck" style="left:529px;top:280px" width="10" height="10" viewBox="0 0 10 10"><path d="M1.6 4.8 L3.8 8.2 L8 1.8" fill="none" stroke="#2a3c94" stroke-width="1.7"/></svg>
<span class="t" id="tr" style="left:543.72px;top:279.00px;font-size:12.5px;transform:scaleX(0.8272);transform-origin:0 0">Transfer rate</span>
<div class="a sep" style="top:293px"></div>
<span class="t" id="mn" style="left:526.67px;top:297.00px;font-size:12.5px;transform:scaleX(0.8066);transform-origin:0 0">Minimum</span>
<div class="a lcd" style="top:312px"><span class="lcdt" style="color:#10b0f8">48.3 MB/s</span></div>
<span class="t" id="mx" style="left:526.51px;top:330.00px;font-size:12.5px;transform:scaleX(0.8150);transform-origin:0 0">Maximum</span>
<div class="a lcd" style="top:344px"><span class="lcdt" style="color:#10b0f8">107.1 MB/s</span></div>
<span class="t" id="av" style="left:526.66px;top:361.00px;font-size:12.5px;transform:scaleX(0.8533);transform-origin:0 0">Average</span>
<div class="a lcd" style="top:374px;height:15px"><span class="lcdt" style="color:#10b0f8">82.4 MB/s</span></div>
<div class="a sep" style="top:397px"></div>
<div class="a chk" style="left:527px;top:403px"></div>
<svg class="a ck" style="left:529px;top:404px" width="10" height="10" viewBox="0 0 10 10"><path d="M1.6 4.8 L3.8 8.2 L8 1.8" fill="none" stroke="#2a3c94" stroke-width="1.7"/></svg>
<span class="t" id="at" style="left:543.16px;top:404.00px;font-size:12.5px;transform:scaleX(0.8298);transform-origin:0 0">Access time</span>
<div class="a lcd" style="top:419px"><span class="lcdt" style="color:#f4f400">13.4 ms</span></div>
<div class="a chk" style="left:527px;top:438px"></div>
<svg class="a ck" style="left:529px;top:439px" width="10" height="10" viewBox="0 0 10 10"><path d="M1.6 4.8 L3.8 8.2 L8 1.8" fill="none" stroke="#2a3c94" stroke-width="1.7"/></svg>
<span class="t" id="br" style="left:542.46px;top:438.00px;font-size:12.5px;transform:scaleX(0.8303);transform-origin:0 0">Burst rate</span>
<div class="a lcd" style="top:453px"><span class="lcdt" style="color:#fff">110.7 MB/s</span></div>
<span class="t" id="cpu" style="left:525.78px;top:471.00px;font-size:12.5px;transform:scaleX(0.8517);transform-origin:0 0">CPU usage</span>
<div class="a lcd" style="top:486px"><span class="lcdt" style="color:#fff">95.9%</span></div>
</div>
</body>
</html>
